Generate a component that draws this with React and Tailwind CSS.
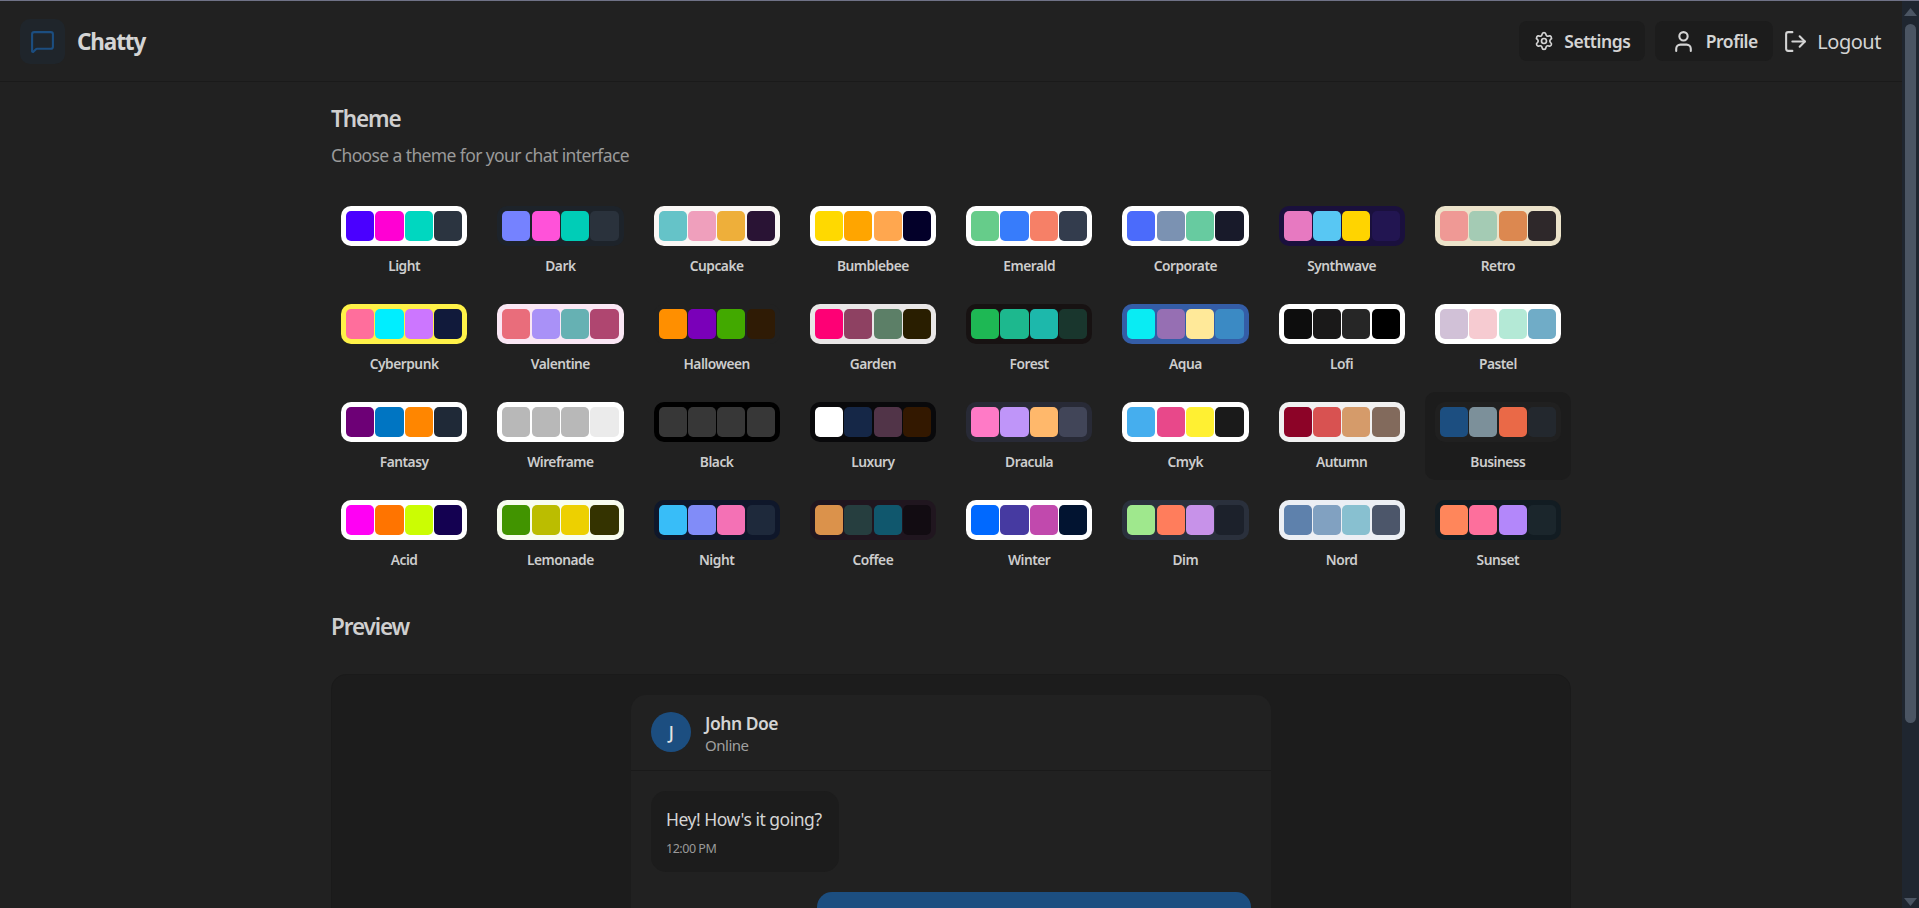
import { LogOut, MessageSquare, Settings, User } from 'lucide-react';

const THEMES = [
  ['Light', '#ffffff', '#4a00ff', '#ff00d3', '#00d7c0', '#2b3440'],
  ['Dark', '#1d232a', '#7582ff', '#ff52d9', '#00cdb7', '#2a323c'],
  ['Cupcake', '#faf7f5', '#65c3c8', '#ef9fbc', '#eeaf3a', '#291334'],
  ['Bumblebee', '#ffffff', '#ffd900', '#ffa500', '#ffa74f', '#030029'],
  ['Emerald', '#ffffff', '#66cc8a', '#377cfb', '#f68067', '#333c4d'],
  ['Corporate', '#ffffff', '#4b6bfb', '#7b92b2', '#67cba0', '#181a2a'],
  ['Synthwave', '#1a103d', '#e779c1', '#58c7f3', '#ffd400', '#221551'],
  ['Retro', '#ece3ca', '#ef9995', '#a4cbb4', '#dc8850', '#2e282a'],
  ['Cyberpunk', '#fff248', '#ff6e9c', '#00eeff', '#cc76ff', '#111a3b'],
  ['Valentine', '#fae7f4', '#e96d7b', '#a991f7', '#66b1b3', '#af4670'],
  ['Halloween', '#212121', '#ff8f00', '#7a00b9', '#42a900', '#2f1b05'],
  ['Garden', '#e9e7e7', '#fe0075', '#8e4162', '#5c7f67', '#291e00'],
  ['Forest', '#171212', '#1eb854', '#1db88e', '#1db8ab', '#19362d'],
  ['Aqua', '#345da7', '#09ecf3', '#966fb3', '#ffe999', '#3b8ac4'],
  ['Lofi', '#ffffff', '#0d0d0d', '#1a1919', '#262626', '#000000'],
  ['Pastel', '#ffffff', '#d1c1d7', '#f6cbd1', '#b4e9d6', '#70acc7'],
  ['Fantasy', '#ffffff', '#6d0076', '#0075c2', '#ff8600', '#1f2937'],
  ['Wireframe', '#ffffff', '#b8b8b8', '#b8b8b8', '#b8b8b8', '#ebebeb'],
  ['Black', '#000000', '#373737', '#373737', '#373737', '#373737'],
  ['Luxury', '#09090b', '#ffffff', '#152747', '#513448', '#331800'],
  ['Dracula', '#282a36', '#ff7ac6', '#bf95f9', '#ffb86b', '#414558'],
  ['Cmyk', '#ffffff', '#45aeee', '#e8488a', '#fff032', '#1a1a1a'],
  ['Autumn', '#f1f1f1', '#8c0327', '#d85251', '#d59b6a', '#826a5c'],
  ['Business', '#202020', '#1c4e80', '#7c909a', '#ea6947', '#23282e'],
  ['Acid', '#ffffff', '#ff00f4', '#ff7400', '#cbfd03', '#140151'],
  ['Lemonade', '#f8fdef', '#419400', '#bbbd00', '#edd000', '#343300'],
  ['Night', '#0f172a', '#38bdf8', '#818cf8', '#f471b5', '#1e293b'],
  ['Coffee', '#20161f', '#db924b', '#263e3f', '#10576d', '#120c12'],
  ['Winter', '#ffffff', '#0069ff', '#463aa1', '#c149ad', '#021431'],
  ['Dim', '#2a303c', '#9fe88d', '#ff7d5c', '#c792e9', '#1c212b'],
  ['Nord', '#eceff4', '#5e81ac', '#81a1c1', '#88c0d0', '#4c566a'],
  ['Sunset', '#121c22', '#ff865b', '#fd6f9c', '#b387fa', '#1b262c'],
];

const ThemeButton = ({ theme }) => {
  const [name, base, ...colors] = theme;
  const selected = name === 'Business';

  return (
    <button className={`flex flex-col items-center gap-2 rounded-[10px] p-[10px] ${selected ? 'bg-[#1c1c1c]' : ''}`}>
      <div className="grid h-10 w-full grid-cols-4 gap-[1.25px] rounded-[10px] p-[5px]" style={{ backgroundColor: base }}>
        {colors.map((color, index) => (
          <div key={index} className="rounded-[5px]" style={{ backgroundColor: color }} />
        ))}
      </div>
      <span className="h-5 text-[13.75px] leading-[23px] font-semibold text-[#cdcdcd]">{name}</span>
    </button>
  );
};

const Navbar = () => (
  <header className="flex h-[81px] items-center justify-between border-b border-[#1a1a1a] pr-[21px] pl-5">
    <div className="flex items-center gap-3">
      <div className="flex size-[45px] items-center justify-center rounded-[10px] bg-[#1f252b]">
        <MessageSquare className="size-[25px] text-[#1c4e80]" />
      </div>
      <span className="pt-[2px] text-[22.5px] font-bold tracking-[-0.05em] text-[#d4d4d4]">Chatty</span>
    </div>
    <div className="flex items-center">
      <button className="flex h-10 w-[126px] items-center justify-center gap-[10px] rounded-[8px] bg-[#1c1c1c] text-[17.5px] font-semibold text-[#d4d4d4]">
        <Settings className="size-5" />
        Settings
      </button>
      <button className="ml-[10px] flex h-10 w-[118px] items-center justify-center gap-[10px] rounded-[8px] bg-[#1c1c1c] text-[17.5px] font-semibold text-[#d4d4d4]">
        <User className="size-[25px]" />
        Profile
      </button>
      <button className="ml-[10px] flex items-center gap-[9px] text-[20px] text-[#d4d4d4]">
        <LogOut className="size-[25px]" />
        <span className="pt-[2px]">Logout</span>
      </button>
    </div>
  </header>
);

const Preview = () => (
  <div className="mt-[30px] h-[400px] rounded-[15px] border border-[#1a1a1a] bg-[#1c1c1c] p-5">
    <div className="mx-auto w-[640px] rounded-[15px] bg-[#212121]">
      <div className="flex items-center gap-[14px] border-b border-[#1a1a1a] px-5 pt-[17px] pb-[18px]">
        <div className="flex size-10 items-center justify-center rounded-full bg-[#1c4e80] text-[17.5px] font-medium text-[#e4e4e4]">
          J
        </div>
        <div className="h-10">
          <div className="text-[17.5px] leading-[22px] font-semibold text-[#d4d4d4]">John Doe</div>
          <div className="mt-[2px] text-[15px] leading-[18px] text-[#a0a0a0]">Online</div>
        </div>
      </div>
      <div className="flex flex-col gap-5 p-5">
        <div className="h-[81px] w-[188px] rounded-[15px] bg-[#1c1c1c] px-[15px] pt-4">
          <p className="text-[17.5px] leading-[25px] whitespace-nowrap text-[#d4d4d4]">Hey! How's it going?</p>
          <p className="mt-[7.5px] text-[12.5px] leading-[17px] text-[#9a9a9a]">12:00 PM</p>
        </div>
        <div className="ml-auto h-[100px] w-[434px] rounded-[15px] bg-[#1c4e80]" />
      </div>
    </div>
  </div>
);

const Scrollbar = () => (
  <aside className="flex h-full w-[17px] shrink-0 flex-col items-center bg-[#1f2630] pt-[7px]">
    <svg width="13" height="8" viewBox="0 0 13 8" className="shrink-0">
      <path d="M6.5 0 13 8H0z" fill="#4b5563" />
    </svg>
    <div className="mt-2 h-[699px] w-[11px] shrink-0 rounded-full bg-[#4b5563]" />
    <svg width="13" height="8" viewBox="0 0 13 8" className="mt-auto mb-[2px] shrink-0">
      <path d="M0 0h13L6.5 8z" fill="#4b5563" />
    </svg>
  </aside>
);

export default function App() {
  return (
    <div className="flex h-[908px] flex-col overflow-hidden bg-[#212121] font-['Noto_Sans',sans-serif] tracking-[-0.03em]">
      <div className="h-px shrink-0 bg-[#6f7287]" />
      <div className="flex min-h-0 flex-1">
        <div className="min-w-0 flex-1 overflow-hidden">
          <Navbar />
          <main className="mx-auto w-[1280px] px-5 pt-5">
            <h2 className="text-[22.5px] leading-[33px] font-semibold tracking-[-0.05em] text-[#cfcfcf]">Theme</h2>
            <p className="mt-2 text-[17.5px] leading-[25px] tracking-[-0.035em] text-[#9a9a9a]">Choose a theme for your chat interface</p>
            <div className="mt-[28px] grid grid-cols-8 gap-[10px]">
              {THEMES.map((theme) => (
                <ThemeButton key={theme[0]} theme={theme} />
              ))}
            </div>
            <h3 className="mt-[31px] text-[22.5px] leading-[35px] font-semibold tracking-[-0.05em] text-[#cfcfcf]">Preview</h3>
            <Preview />
          </main>
        </div>
        <Scrollbar />
      </div>
    </div>
  );
}
